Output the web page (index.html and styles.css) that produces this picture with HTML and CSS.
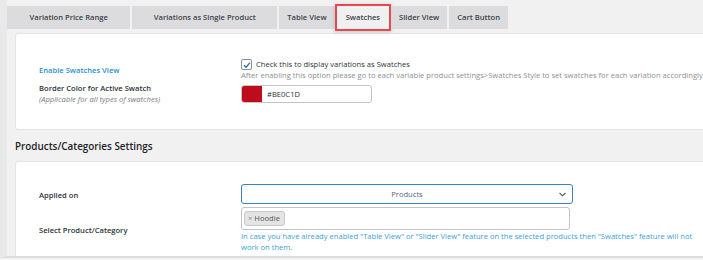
FILE: index.html
```html
<!DOCTYPE html>
<html lang="en">
<head>
  <meta charset="UTF-8" />
  <title>Swatches Settings</title>
  <link rel="stylesheet" href="styles.css">
</head>
<body>
  <div class="page">
    <nav class="tabs">
      <a class="tab tab-wide">Variation Price Range</a>
      <a class="tab tab-wide">Variations as Single Product</a>
      <a class="tab">Table View</a>
      <a class="tab active">Swatches</a>
      <a class="tab">Slider View</a>
      <a class="tab">Cart Button</a>
    </nav>

    <section class="panel panel-first">
      <div class="row">
        <div class="label label-link">Enable Swatches View</div>
        <div class="field">
          <label class="check-line">
            <span class="checkbox">
              <svg width="8" height="8" viewBox="0 0 8 8"><path d="M1 4.2 L3.1 6.2 L7 1.6" fill="none" stroke="#2271b1" stroke-width="1.3"/></svg>
            </span>
            Check this to display variations as Swatches
          </label>
          <div class="desc">After enabling this option please go to each variable product settings&gt;Swatches Style to set swatches for each variation accordingly</div>
        </div>
      </div>
      <div class="row row-color">
        <div class="label">
          Border Color for Active Swatch
          <div class="note">(Applicable for all types of swatches)</div>
        </div>
        <div class="field">
          <div class="color-input">
            <span class="color-chip"></span>
            <span class="color-value">#BE0C1D</span>
          </div>
        </div>
      </div>
    </section>

    <h2 class="section-title">Products/Categories Settings</h2>

    <section class="panel panel-second">
      <div class="row row-applied">
        <div class="label">Applied on</div>
        <div class="field">
          <div class="select">
            <span>Products</span>
            <svg class="chevron" width="7" height="5" viewBox="0 0 7 5"><path d="M0.6 1 L3.5 3.8 L6.4 1" fill="none" stroke="#50575e" stroke-width="1.1"/></svg>
          </div>
        </div>
      </div>
      <div class="row row-products">
        <div class="label">Select Product/Category</div>
        <div class="field">
          <div class="multi">
            <span class="tag"><span class="tag-x">×</span>Hoodie</span>
          </div>
          <div class="help">In case you have already enabled "Table View" or "Slider View" feature on the selected products then "Swatches" feature will not work on them.</div>
        </div>
      </div>
    </section>
  </div>
</body>
</html>
```

FILE: styles.css
```css
body {
  margin: 0;
  height: 260px;
  overflow: hidden;
  background: #f1f1f1;
  font-family: "Segoe UI", "Open Sans", sans-serif;
  font-size: 7.6px;
  color: #2c3338;
}

.page {
  height: 256px;
  background: #f1f1f1;
  border-left: 7px solid #e9e9ea;
  border-bottom: 2px solid #dcdcde;
  overflow: hidden;
}

.tabs {
  display: flex;
  gap: 2px;
  padding-top: 6px;
}

.tab {
  height: 23px;
  line-height: 23px;
  padding: 0 8px;
  background: #dcdcde;
  color: #3c434a;
  font-weight: 600;
  white-space: nowrap;
}

.tab-wide {
  padding: 0 22.5px;
}

.tab-wide + .tab-wide {
  padding: 0 21.5px;
}

.tab.active {
  padding: 0 9px;
  background: #f0f0f1;
  box-shadow: 0 0 0 2px #e5484d, 0 1px 4px 2px rgba(0, 0, 0, 0.18);
}

.panel {
  margin: 4px 0 0 8px;
  background: #fff;
  border: 1px solid #e2e4e7;
  border-right: none;
  border-radius: 3px 0 0 3px;
  padding-left: 23px;
}

.panel-first {
  padding-top: 25px;
  padding-bottom: 24px;
}

.panel-second {
  margin-top: 0;
  padding-top: 22px;
  padding-bottom: 4px;
}

.row {
  display: flex;
  align-items: center;
}

.row-color {
  margin-top: 2px;
}

.row-applied .label {
  padding-top: 3px;
}

.row-products {
  margin-top: 3px;
}

.label {
  width: 202px;
  flex-shrink: 0;
  font-weight: 600;
  line-height: 11px;
  color: #2c3338;
}

.label-link {
  color: #2a8fd4;
}

.note {
  font-weight: normal;
  font-style: italic;
  color: #787c82;
}

.field {
  flex: 1;
  min-width: 0;
  line-height: 11px;
}

.check-line {
  display: flex;
  align-items: center;
  gap: 4px;
  white-space: nowrap;
}

.checkbox {
  width: 9px;
  height: 9px;
  border: 1px solid #8c8f94;
  border-radius: 2px;
  display: flex;
  align-items: center;
  justify-content: center;
}

.desc {
  color: #8c8f94;
  white-space: nowrap;
}

.color-input {
  width: 129px;
  height: 16px;
  border: 1px solid #c3c4c7;
  border-radius: 3px;
  display: flex;
  align-items: center;
  overflow: hidden;
}

.color-chip {
  width: 20px;
  height: 100%;
  background: #be0c1d;
}

.color-value {
  margin-left: 5px;
  color: #2c3338;
}

.section-title {
  margin: 9px 0 8px 8px;
  font-size: 9.9px;
  line-height: 14px;
  font-weight: 600;
  color: #1d2327;
}

.select {
  width: 330px;
  height: 18px;
  border: 1px solid #3582c4;
  border-radius: 3px;
  display: flex;
  align-items: center;
  justify-content: center;
  position: relative;
  color: #50698a;
}

.chevron {
  position: absolute;
  right: 6px;
  top: 7px;
}

.multi {
  width: 329px;
  height: 23px;
  box-sizing: border-box;
  border: 1px solid #c3c4c7;
  border-radius: 3px;
  display: flex;
  align-items: center;
  padding-left: 2px;
}

.tag {
  height: 13px;
  line-height: 13px;
  padding: 0 4px 0 3px;
  background: #e4e4e4;
  border: 1px solid #c8c8c8;
  border-radius: 3px;
  color: #555;
}

.tag-x {
  color: #888;
  margin-right: 2px;
}

.help {
  margin-top: 1px;
  color: #3a9fd8;
  max-width: 460px;
}
```
